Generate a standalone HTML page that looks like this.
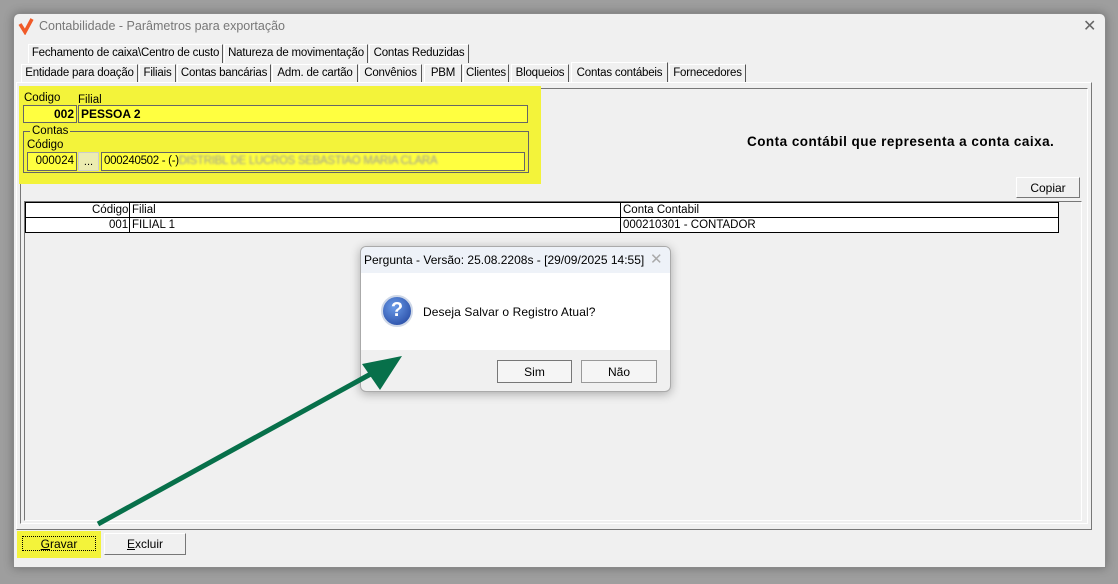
<!DOCTYPE html>
<html><head><meta charset="utf-8"><style>
*{box-sizing:border-box;margin:0;padding:0}
body{width:1118px;height:584px;background:#9e9e9e;font-family:"Liberation Sans",sans-serif;font-size:12px;position:relative;overflow:hidden;color:#000}
.a{position:absolute}
.win{left:13px;top:13px;width:1093px;height:555px;background:#f0f0f0;border:1px solid #8a8a8a;border-radius:6px 6px 0 0;box-shadow:0 0 10px rgba(0,0,0,.3)}
.tab{position:absolute;height:19px;border:1px solid #fff;border-right:1px solid #555;border-bottom:none;padding-top:2px;font-size:11.5px;white-space:nowrap;background:#f0f0f0;text-align:center;overflow:hidden;letter-spacing:-0.2px}
.y{background:#f3f33a}
.fld{position:absolute;background:#ffff40;border:1px solid #666;}
.btn{position:absolute;background:#f0f0f0;border:1px solid #fff;border-right-color:#777;border-bottom-color:#777;text-align:center;font-size:12px}
.d{font-family:"Liberation Sans",sans-serif;font-size:12px}
</style></head><body>
<div class="a win"></div>
<svg class="a" style="left:18px;top:17px" width="16" height="18"><path d="M2 7 L7 15 L14 2" stroke="#f05a28" stroke-width="3.5" fill="none"/></svg>
<div class="a" style="left:39px;top:19px;font-size:12.5px;color:#777">Contabilidade - Parâmetros para exportação</div>
<div class="a" style="left:1083px;top:16px;font-size:16px;color:#666">✕</div>
<div class="tab" style="left:28px;top:44px;width:195px">Fechamento de caixa\Centro de custo</div>
<div class="tab" style="left:224px;top:44px;width:144px">Natureza de movimentação</div>
<div class="tab" style="left:369px;top:44px;width:100px">Contas Reduzidas</div>
<div class="tab" style="left:21px;top:64px;width:117px">Entidade para doação</div>
<div class="tab" style="left:139px;top:64px;width:37px">Filiais</div>
<div class="tab" style="left:177px;top:64px;width:94px">Contas bancárias</div>
<div class="tab" style="left:272px;top:64px;width:86px">Adm. de cartão</div>
<div class="tab" style="left:359px;top:64px;width:63px">Convênios</div>
<div class="tab" style="left:424px;top:64px;width:38px">PBM</div>
<div class="tab" style="left:463px;top:64px;width:46px">Clientes</div>
<div class="tab" style="left:511px;top:64px;width:58px">Bloqueios</div>
<div class="tab" style="left:571px;top:62px;width:97px;height:21px;padding-top:4px">Contas contábeis</div>
<div class="tab" style="left:669px;top:64px;width:77px">Fornecedores</div>
<div class="a" style="left:16px;top:82px;width:1076px;height:448px;border:1px solid #fff;border-right-color:#777;border-bottom-color:#777"></div>
<div class="a" style="left:20px;top:88px;width:1068px;height:436px;border:1px solid #777;border-right-color:#fff;border-bottom-color:#fff"></div>
<div class="a y" style="left:19px;top:86px;width:522px;height:98px"></div>
<div class="a" style="left:24px;top:92px;font-size:11.5px">Codigo</div>
<div class="a" style="left:78px;top:94px;font-size:11.5px">Filial</div>
<div class="fld" style="left:23px;top:105px;width:54px;height:18px;text-align:right;font-weight:bold;padding:1px 2px">002</div>
<div class="fld" style="left:78px;top:105px;width:450px;height:18px;font-weight:bold;padding:1px 2px">PESSOA 2</div>
<div class="a" style="left:23px;top:131px;width:506px;height:42px;border:1px solid #666"></div>
<div class="a y" style="left:30px;top:125px;font-size:11.5px;padding:0 2px">Contas</div>
<div class="a" style="left:27px;top:139px;font-size:11.5px">Código</div>
<div class="fld" style="left:27px;top:152px;width:50px;height:19px;text-align:right;padding:2px 2px;font-size:11.5px">000024</div>
<div class="a" style="left:78px;top:152px;width:21px;height:19px;background:#ececb0;border:1px solid #ccc;text-align:center;font-size:11px;padding-top:3px">...</div>
<div class="fld" style="left:101px;top:152px;width:424px;height:19px;padding:2px 2px;font-size:11.5px;letter-spacing:-0.3px">000240502 - (-)<span style="color:#999;filter:blur(1px)">DISTRIBL DE LUCROS SEBASTIAO MARIA CLARA</span></div>
<div class="a" style="left:747px;top:134px;font-weight:bold;font-size:13.5px;letter-spacing:0.47px">Conta contábil que representa a conta caixa.</div>
<div class="btn" style="left:1016px;top:177px;width:64px;height:21px;padding-top:3px">Copiar</div>
<div class="a" style="left:24px;top:201px;width:1058px;height:320px;border:1px solid #777;border-right-color:#fff;border-bottom-color:#fff;background:#f0f0f0"></div>
<div class="a" style="left:25px;top:202px;width:1034px;height:31px;background:#fff;border:1px solid #000"></div>
<div class="a" style="left:25px;top:217px;width:1034px;height:1px;background:#000"></div>
<div class="a" style="left:129px;top:202px;width:1px;height:31px;background:#000"></div>
<div class="a" style="left:620px;top:202px;width:1px;height:31px;background:#000"></div>
<div class="a" style="left:92px;top:204px;font-size:11.5px">Código</div>
<div class="a" style="left:132px;top:204px;font-size:11.5px">Filial</div>
<div class="a" style="left:623px;top:204px;font-size:11.5px">Conta Contabil</div>
<div class="a" style="left:109px;top:219px;font-size:11.5px">001</div>
<div class="a" style="left:132px;top:219px;font-size:11.5px">FILIAL 1</div>
<div class="a" style="left:623px;top:219px;font-size:11.5px">000210301 - CONTADOR</div>
<div class="a y" style="left:17px;top:531px;width:84px;height:27px"></div>
<div class="a" style="left:22px;top:536px;width:74px;height:15px;border:1px dotted #000;text-align:center;font-size:12px"><u>G</u>ravar</div>
<div class="btn" style="left:104px;top:533px;width:82px;height:22px;padding-top:3px"><u>E</u>xcluir</div>
<div class="a" style="left:360px;top:246px;width:311px;height:146px;background:#f0f0f0;border:1px solid #aaa;border-radius:6px;box-shadow:0 2px 10px rgba(0,0,0,.3);overflow:hidden">
<div class="a" style="left:0;top:0;width:311px;height:26px;background:#eef2f8"></div>
<div class="a d" style="left:3px;top:6px;font-size:12px">Pergunta - Versão: 25.08.2208s - [29/09/2025 14:55]</div>
<div class="a" style="left:289px;top:3px;color:#aaa;font-size:15px">✕</div>
<div class="a" style="left:0;top:26px;width:311px;height:77px;background:#fff"></div>
<div class="a" style="left:20px;top:48px;width:32px;height:32px;border-radius:50%;background:radial-gradient(circle at 40% 35%,#6a9be8,#1d3f9a);border:2px solid #cfd8e8;color:#fff;font-weight:bold;font-size:20px;text-align:center;line-height:27px">?</div>
<div class="a d" style="left:62px;top:58px;letter-spacing:0.1px">Deseja Salvar o Registro Atual?</div>
<div class="a d" style="left:136px;top:113px;width:75px;height:23px;border:1px solid #777;background:#f5f5f5;text-align:center;padding-top:4px">Sim</div>
<div class="a d" style="left:220px;top:113px;width:76px;height:23px;border:1px solid #999;background:#f5f5f5;text-align:center;padding-top:4px">Não</div>
</div>
<svg class="a" style="left:0;top:0" width="1118" height="584"><line x1="98" y1="524" x2="378" y2="370" stroke="#07704a" stroke-width="5"/><polygon points="402,356 362,364 380,390" fill="#07704a"/></svg>
</body></html>
